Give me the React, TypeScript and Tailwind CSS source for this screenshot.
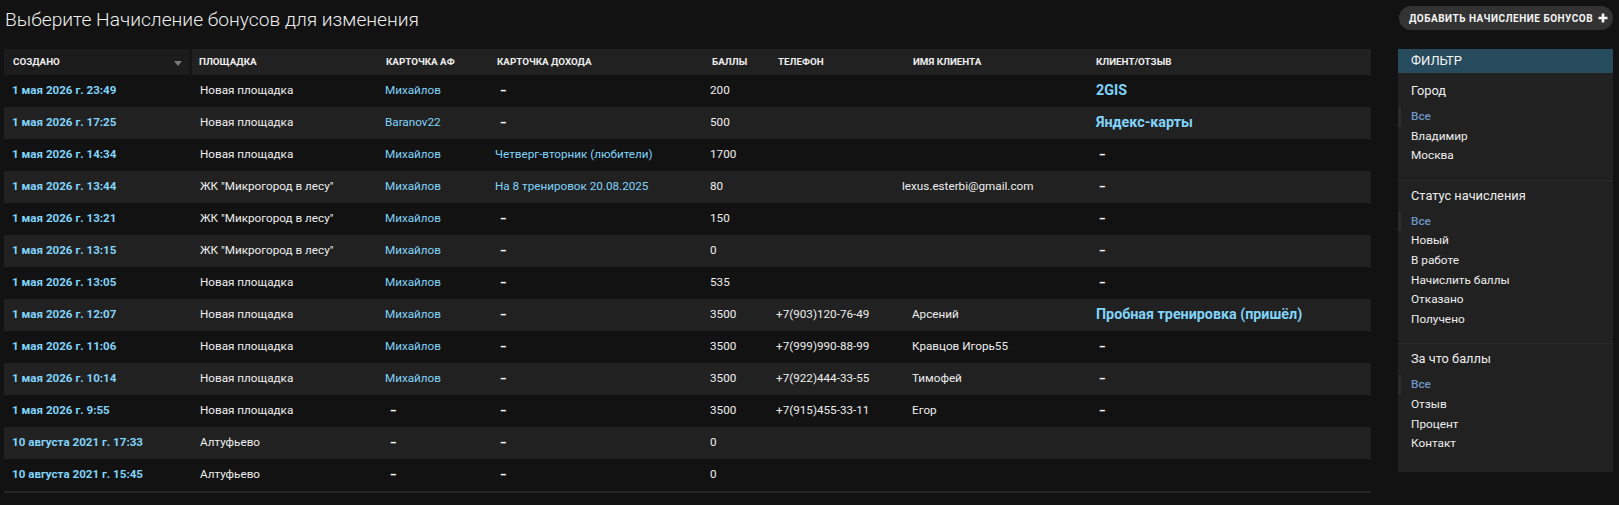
import React from "react";

type Row = {
  date: string;
  place: string;
  af: string | null;
  income: string | null;
  points: string;
  phone: string;
  name: string;
  review: string | null | "";
};

const rows: Row[] = [
  { date: "1 мая 2026 г. 23:49", place: "Новая площадка", af: "Михайлов", income: null, points: "200", phone: "", name: "", review: "2GIS" },
  { date: "1 мая 2026 г. 17:25", place: "Новая площадка", af: "Baranov22", income: null, points: "500", phone: "", name: "", review: "Яндекс-карты" },
  { date: "1 мая 2026 г. 14:34", place: "Новая площадка", af: "Михайлов", income: "Четверг-вторник (любители)", points: "1700", phone: "", name: "", review: null },
  { date: "1 мая 2026 г. 13:44", place: 'ЖК "Микрогород в лесу"', af: "Михайлов", income: "На 8 тренировок 20.08.2025", points: "80", phone: "", name: "lexus.esterbi@gmail.com", review: null },
  { date: "1 мая 2026 г. 13:21", place: 'ЖК "Микрогород в лесу"', af: "Михайлов", income: null, points: "150", phone: "", name: "", review: null },
  { date: "1 мая 2026 г. 13:15", place: 'ЖК "Микрогород в лесу"', af: "Михайлов", income: null, points: "0", phone: "", name: "", review: null },
  { date: "1 мая 2026 г. 13:05", place: "Новая площадка", af: "Михайлов", income: null, points: "535", phone: "", name: "", review: null },
  { date: "1 мая 2026 г. 12:07", place: "Новая площадка", af: "Михайлов", income: null, points: "3500", phone: "+7(903)120-76-49", name: "Арсений", review: "Пробная тренировка (пришёл)" },
  { date: "1 мая 2026 г. 11:06", place: "Новая площадка", af: "Михайлов", income: null, points: "3500", phone: "+7(999)990-88-99", name: "Кравцов Игорь55", review: null },
  { date: "1 мая 2026 г. 10:14", place: "Новая площадка", af: "Михайлов", income: null, points: "3500", phone: "+7(922)444-33-55", name: "Тимофей", review: null },
  { date: "1 мая 2026 г. 9:55", place: "Новая площадка", af: null, income: null, points: "3500", phone: "+7(915)455-33-11", name: "Егор", review: null },
  { date: "10 августа 2021 г. 17:33", place: "Алтуфьево", af: null, income: null, points: "0", phone: "", name: "", review: "" },
  { date: "10 августа 2021 г. 15:45", place: "Алтуфьево", af: null, income: null, points: "0", phone: "", name: "", review: "" },
];

const GRID = "grid grid-cols-[188px_185px_110px_215px_66px_136px_184px_283px]";

function Dash({ className = "" }: { className?: string }) {
  return <span className={"text-[10px] font-black text-[#f5f5f5] " + className}>–</span>;
}

function FilterSection({ title, items, last }: { title: string; items: string[]; last?: boolean }) {
  return (
    <div className={last ? "pt-[6px] pb-[18px]" : "pt-[6px] pb-[14px] border-b border-[#2a2a2a]"}>
      <div className="h-[18px] leading-[18px] pl-[13px] text-[12.8px] text-[#eeeeee]">{title}</div>
      <ul className="mt-[7px]">
        {items.map((it, i) => (
          <li
            key={it}
            className={
              i === 0
                ? "h-[19.6px] leading-[19.6px] pl-[10px] border-l-[3px] border-[#2c2c2c] text-[11.8px] font-medium text-[#6f94c6]"
                : "h-[19.6px] leading-[19.6px] pl-[13px] text-[11.8px] text-[#eeeeee]"
            }
          >
            {it}
          </li>
        ))}
      </ul>
    </div>
  );
}

export default function App() {
  return (
    <div className="min-h-screen w-full bg-[#121212] text-[#eeeeee] font-[Roboto,'Liberation_Sans',sans-serif] flex">
      <div className="flex-1 pl-[4px]">
        <div className="h-[49px] pl-[1px] pt-[8px]">
          <h1 className="text-[19.2px] leading-[24px] font-light text-[#eeeeee] whitespace-nowrap">
            Выберите Начисление бонусов для изменения
          </h1>
        </div>
        <div className="w-[1367px]">
          <div className={GRID + " h-[26px] bg-[#212121] text-[9.8px] font-bold uppercase text-[#eeeeee]"}>
            <div className="relative flex items-center pl-[9px] bg-[#1c1c1c] border-r-[3px] border-[#161616]">
              Создано
              <span className="absolute right-[7px] top-[12px] w-0 h-0 border-l-[4px] border-r-[4px] border-t-[5px] border-l-transparent border-r-transparent border-t-[#7a7a7a]" />
            </div>
            <div className="flex items-center pl-[7px]">Площадка</div>
            <div className="flex items-center pl-[9px]">Карточка АФ</div>
            <div className="flex items-center pl-[10px]">Карточка дохода</div>
            <div className="flex items-center pl-[10px]">Баллы</div>
            <div className="flex items-center pl-[10px]">Телефон</div>
            <div className="flex items-center pl-[9px]">Имя клиента</div>
            <div className="flex items-center pl-[8px]">Клиент/отзыв</div>
          </div>
          {rows.map((r, i) => (
            <div
              key={i}
              className={GRID + " h-[32px] items-center text-[11.7px] " + (i % 2 === 1 ? "bg-[#212121]" : "bg-[#121212]")}
            >
              <div className="pl-[8px] text-[11.6px] font-bold text-[#81d4fa] whitespace-nowrap">{r.date}</div>
              <div className="pl-[8px] whitespace-nowrap">{r.place}</div>
              <div className="pl-[8px] whitespace-nowrap">
                {r.af ? <span className="text-[#81d4fa]">{r.af}</span> : <Dash className="ml-[5px]" />}
              </div>
              <div className="pl-[8px] whitespace-nowrap">
                {r.income ? <span className="text-[#81d4fa]">{r.income}</span> : <Dash className="ml-[5px]" />}
              </div>
              <div className="pl-[8px]">{r.points}</div>
              <div className="pl-[8px] whitespace-nowrap">{r.phone}</div>
              <div className="pl-[8px] whitespace-nowrap">
                {r.name.includes("@") ? <span className="-ml-[10px]">{r.name}</span> : r.name}
              </div>
              <div className="pl-[8px] whitespace-nowrap">
                {r.review === null ? (
                  <Dash className="ml-[3px]" />
                ) : r.review ? (
                  <span className="text-[14.3px] font-bold text-[#81d4fa]">{r.review}</span>
                ) : null}
              </div>
            </div>
          ))}
          <div className="h-[2px] bg-[#262626]" />
        </div>
      </div>
      <div className="w-[215px] ml-[27px] mr-[6px] shrink-0">
        <div className="h-[49px] pt-[6px] flex justify-end">
          <button className="h-[24px] w-[214px] rounded-full bg-[#333333] flex items-center pl-[10px] gap-[5px] whitespace-nowrap text-[10px] font-bold uppercase tracking-[0.5px] text-[#f5f5f5]">
            Добавить начисление бонусов
            <svg width="10" height="10" viewBox="0 0 10 10" className="shrink-0">
              <path d="M5 0.5v9M0.5 5h9" stroke="#f5f5f5" strokeWidth="2.6" />
            </svg>
          </button>
        </div>
        <div className="bg-[#212121]">
          <div className="h-[24px] bg-[#264b5d] pl-[13px] flex items-center text-[13px] uppercase text-[#f5f5f5]">
            Фильтр
          </div>
          <div className="pt-[3px]">
            <FilterSection title="Город" items={["Все", "Владимир", "Москва"]} />
            <FilterSection
              title="Статус начисления"
              items={["Все", "Новый", "В работе", "Начислить баллы", "Отказано", "Получено"]}
            />
            <FilterSection title="За что баллы" items={["Все", "Отзыв", "Процент", "Контакт"]} last />
          </div>
        </div>
      </div>
    </div>
  );
}
